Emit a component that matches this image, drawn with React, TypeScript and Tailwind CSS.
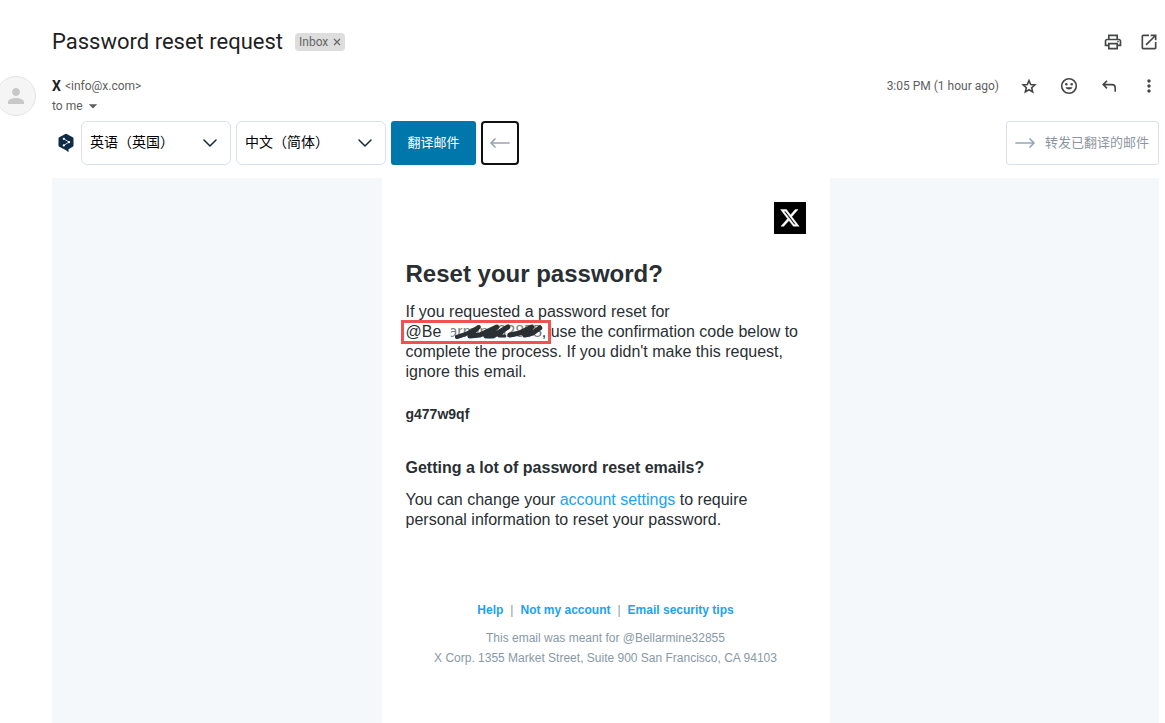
import {
  MdArrowDropDown,
  MdMoreVert,
  MdOpenInNew,
  MdOutlinePrint,
  MdPerson,
} from "react-icons/md";

const StarIcon = () => (
  <svg viewBox="0 0 20 20" className="size-5" fill="none" stroke="currentColor" strokeWidth="1.600">
    <path d="M10 4.600l1.700 3.900 4.200.4-3.200 2.800.95 4.200L10 13.700l-3.650 2.200.95-4.200L4.100 8.900l4.200-.4z" />
  </svg>
);

const ReplyIcon = () => (
  <svg viewBox="0 0 20 20" className="size-5" fill="none" stroke="currentColor" strokeWidth="1.600">
    <path d="M8 4.800 4.200 8.600l3.800 3.800M4.200 8.600H13c2 0 3.200 1.400 3.200 3.200v4" />
  </svg>
);

const SmileIcon = () => (
  <svg viewBox="0 0 20 20" className="size-5">
    <circle cx="10" cy="10" r="7.300" fill="none" stroke="currentColor" strokeWidth="1.600" />
    <circle cx="7.300" cy="8.200" r="1.250" fill="currentColor" />
    <circle cx="12.700" cy="8.200" r="1.250" fill="currentColor" />
    <path d="M6.500 11.300h7a3.600 2.900 0 0 1-7 0z" fill="currentColor" />
  </svg>
);

const TranslateLogo = () => (
  <svg viewBox="0 0 16 20" className="h-5 w-4 shrink-0">
    <path
      d="M7.300 0.900a1.500 1.500 0 0 1 1.400 0l6 3.400a1.500 1.500 0 0 1 .8 1.300v6.900a1.500 1.500 0 0 1-.8 1.300L10.500 16.200V19.200L7.600 17 1.300 13.800a1.500 1.500 0 0 1-.8-1.300V5.600a1.500 1.500 0 0 1 .8-1.300z"
      fill="#0f2b46"
    />
    <path d="M5.800 5.800 11 9.100 5.800 12.400" fill="none" stroke="#fff" strokeWidth="0.800" />
    <circle cx="5.800" cy="5.800" r="1.100" fill="#fff" />
    <circle cx="11" cy="9.100" r="1.200" fill="#fff" />
    <circle cx="5.800" cy="12.400" r="1.100" fill="#fff" />
  </svg>
);

const LongArrow: React.FC<{ className?: string }> = ({ className = "" }) => (
  <svg
    viewBox="0 0 20 12"
    className={`h-3 w-5 shrink-0 ${className}`}
    fill="none"
    stroke="#9aa4b0"
    strokeWidth="1.700"
    strokeLinecap="round"
    strokeLinejoin="round"
  >
    <path d="M1 6h18M15 2 19 6l-4 4" />
  </svg>
);

const XLogo = () => (
  <svg viewBox="0 0 32 32" className="size-8">
    <path d="M0 0h32v32H0z" fill="#000" />
    <path
      transform="translate(5.5 5.600) scale(0.860)"
      fill="#fff"
      stroke="#fff"
      strokeWidth="0.500"
      d="M18.244 2.250h3.308l-7.227 8.260 8.502 11.240H16.170l-5.214-6.817L4.990 21.750H1.680l7.730-8.835L1.254 2.250H8.080l4.713 6.231zm-1.161 17.520h1.833L7.084 4.126H5.117z"
    />
  </svg>
);

// Marker strokes laid over the handle
const Scribble = () => (
  <svg viewBox="0 0 145 18" preserveAspectRatio="none" className="block h-full w-full">
    <path d="M37 1h10v15H37z" fill="#fff" />
    <path d="M47 1h90v14H47z" fill="#fff" opacity="0.400" />
    <g fill="none" stroke="#292f33" strokeLinecap="round" strokeLinejoin="round">
      <path d="M53 14 L62 11 L75 4 L66 13" strokeWidth="4" />
      <path d="M66 13 L76 12 L93 4 L82 13 L89 13 L104 4" strokeWidth="5" />
      <path d="M104 4 L95 13 L101 13" strokeWidth="3" />
      <path d="M106 12 L116 10 L128 4 L121 12 L129 10 L136 5" strokeWidth="5" />
    </g>
  </svg>
);

const LanguageSelect: React.FC<{ label: string; options: string[] }> = ({ label, options }) => (
  <div className="grid w-[150px] items-center">
    <select
      aria-label={label}
      className="col-start-1 row-start-1 h-11 w-full appearance-none rounded-md border border-[#dae1e8] bg-white pr-8 pb-[2px] pl-2 text-sm text-black"
    >
      {options.map((option) => (
        <option key={option}>{option}</option>
      ))}
    </select>
    <svg
      viewBox="0 0 14 8"
      className="pointer-events-none col-start-1 row-start-1 mr-[14px] h-2 w-[14px] justify-self-end"
      fill="none"
      stroke="#1b2733"
      strokeWidth="1.500"
      strokeLinecap="round"
      strokeLinejoin="round"
    >
      <path d="M1 1l6 6 6-6" />
    </svg>
  </div>
);

const MessageHeader = () => (
  <header className="text-[#444746]">
    <div className="flex h-9 items-center pl-[52px]">
      <h1 className="pb-[2px] text-[22px] text-[#1f1f1f]">Password reset request</h1>
      <span className="ml-3 flex h-[18px] items-center gap-[5px] rounded bg-[#ddd] px-1 text-xs text-[#666]">
        Inbox
        <button aria-label="Remove label Inbox">
          <svg viewBox="0 0 8 8" className="size-2" stroke="currentColor" strokeWidth="1.200">
            <path d="M1 1l6 6M7 1 1 7" />
          </svg>
        </button>
      </span>
      <div className="ml-auto flex gap-4">
        <button aria-label="Print">
          <MdOutlinePrint className="size-5" />
        </button>
        <button aria-label="Open in new window">
          <MdOpenInNew className="size-5" />
        </button>
      </div>
    </div>

    <div className="mt-4 flex gap-4">
      <div className="-ml-1 grid size-10 shrink-0 place-items-center rounded-full border border-[#e3e3e3] bg-[#f5f5f5]">
        <MdPerson className="size-6 text-[#c8c8c8]" />
      </div>
      <div className="text-xs leading-5 text-[#5e5e5e]">
        <p className="flex h-5 items-center gap-1">
          <b className="text-sm text-[#1f1f1f]">X</b>
          <span>&lt;info@x.com&gt;</span>
        </p>
        <button className="flex h-5 items-center">
          to me
          <MdArrowDropDown className="size-5" />
        </button>
      </div>
      <div className="ml-auto flex h-5 items-center gap-5">
        <time className="text-xs text-[#5e5e5e]">3:05 PM (1 hour ago)</time>
        <button aria-label="Star">
          <StarIcon />
        </button>
        <button aria-label="Add reaction">
          <SmileIcon />
        </button>
        <button aria-label="Reply">
          <ReplyIcon />
        </button>
        <button aria-label="More">
          <MdMoreVert className="size-5" />
        </button>
      </div>
    </div>
  </header>
);

const TranslateBar = () => (
  <div className="mt-[5px] flex items-center gap-[5px] pl-[58px] font-['Liberation_Sans','Noto_Sans_CJK_SC',sans-serif]">
    <div className="mr-[2px]">
      <TranslateLogo />
    </div>
    <LanguageSelect label="源语言" options={["英语（英国）", "中文（简体）"]} />
    <LanguageSelect label="目标语言" options={["中文（简体）", "英语（英国）"]} />
    <button className="h-11 w-[85px] rounded-[3px] bg-[#0077aa] text-[13px] text-white">翻译邮件</button>
    <button
      aria-label="返回"
      className="grid h-11 w-[38px] place-items-center rounded border-2 border-[#101010] bg-white"
    >
      <LongArrow className="rotate-180" />
    </button>
    <button className="ml-auto flex h-11 w-[153px] items-center gap-[10px] rounded-[3px] border border-[#dae1e8] pl-2 text-[13px] text-[#8d96a0]">
      <LongArrow />
      转发已翻译的邮件
    </button>
  </div>
);

const MailBody = () => (
  <div className="mt-[13px] ml-[52px] flex flex-1 justify-center bg-[#f5f8fa] font-['Liberation_Sans',Arial,sans-serif]">
    <article className="w-full max-w-[448px] bg-white px-6 pt-6 text-base leading-5 text-[#292f33]">
      <div className="flex justify-end">
        <XLogo />
      </div>
      <h2 className="mt-6 text-2xl font-bold">Reset your password?</h2>
      <p className="mt-3">
        If you requested a password reset for{" "}
        <span className="relative inline-block">
          @Bellarmine32855,
          <span className="absolute -inset-x-[5px] -inset-y-[2px] border-[3px] border-[#f05252]">
            <Scribble />
          </span>
        </span>{" "}
        use the confirmation code below to complete the process. If you didn't make this request, ignore this
        email.
      </p>
      <p className="mt-[22px] text-sm leading-5 font-bold">g477w9qf</p>
      <h3 className="mt-[34px] font-bold">Getting a lot of password reset emails?</h3>
      <p className="mt-3">
        You can change your{" "}
        <a href="#settings" className="text-[#1da1f2]">
          account settings
        </a>{" "}
        to require personal information to reset your password.
      </p>

      <footer className="mt-[70px] text-center text-xs leading-5 text-[#8899a6]">
        <nav className="flex justify-center gap-[7px]">
          <a href="#help" className="font-bold text-[#1da1f2]">
            Help
          </a>
          <span>|</span>
          <a href="#not-my-account" className="font-bold text-[#1da1f2]">
            Not my account
          </a>
          <span>|</span>
          <a href="#tips" className="font-bold text-[#1da1f2]">
            Email security tips
          </a>
        </nav>
        <p className="mt-2">This email was meant for @Bellarmine32855</p>
        <p>X Corp. 1355 Market Street, Suite 900 San Francisco, CA 94103</p>
      </footer>
    </article>
  </div>
);

const App: React.FC = () => {
  return (
    <main className="flex min-h-screen flex-col overflow-x-hidden bg-white pt-6 pr-[6px] font-[Roboto,sans-serif]">
      <MessageHeader />
      <TranslateBar />
      <MailBody />
    </main>
  );
};

export default App;
